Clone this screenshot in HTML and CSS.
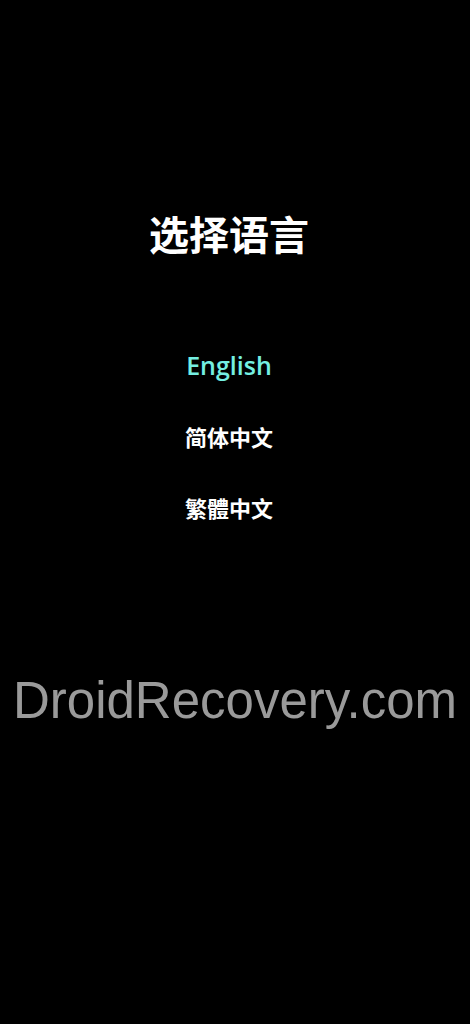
FILE: index.html
```html
<!DOCTYPE html>
<html lang="zh">
<head>
<meta charset="utf-8">
<link rel="stylesheet" href="styles.css">
</head>
<body>
<main class="screen">
  <section class="menu">
    <h1 class="title">选择语言</h1>
    <ul class="langs">
      <li class="lang lang-active">English</li>
      <li class="lang lang-cjk">简体中文</li>
      <li class="lang lang-cjk">繁體中文</li>
    </ul>
  </section>
  <div class="watermark">DroidRecovery.com</div>
</main>
</body>
</html>
```
FILE: styles.css
```css
html, body {
  margin: 0;
  padding: 0;
  background: #000;
}
.screen {
  width: 470px;
  height: 1024px;
  display: flex;
  flex-direction: column;
  align-items: center;
  padding-top: 209px;
  box-sizing: border-box;
}
.menu {
  align-self: stretch;
  display: flex;
  flex-direction: column;
  align-items: center;
  padding-right: 12px;
}
.title {
  margin: 0;
  font-family: "Noto Sans CJK SC", sans-serif;
  font-weight: 700;
  font-size: 40px;
  line-height: 48px;
  color: #fff;
}
.langs {
  list-style: none;
  margin: 92px 0 0;
  padding: 0;
  display: flex;
  flex-direction: column;
  align-items: center;
  gap: 39px;
}
.lang {
  line-height: 32px;
  color: #fff;
}
.lang-active {
  font-family: "Open Sans", sans-serif;
  font-weight: 600;
  font-size: 25px;
  color: #74efe2;
}
.lang-cjk {
  font-family: "Noto Sans CJK SC", sans-serif;
  font-weight: 700;
  font-size: 22px;
}
.watermark {
  margin-top: 149px;
  font-family: "Liberation Sans", Arial, sans-serif;
  font-size: 51px;
  line-height: 58px;
  color: #9a9a9a;
  white-space: nowrap;
}
```
